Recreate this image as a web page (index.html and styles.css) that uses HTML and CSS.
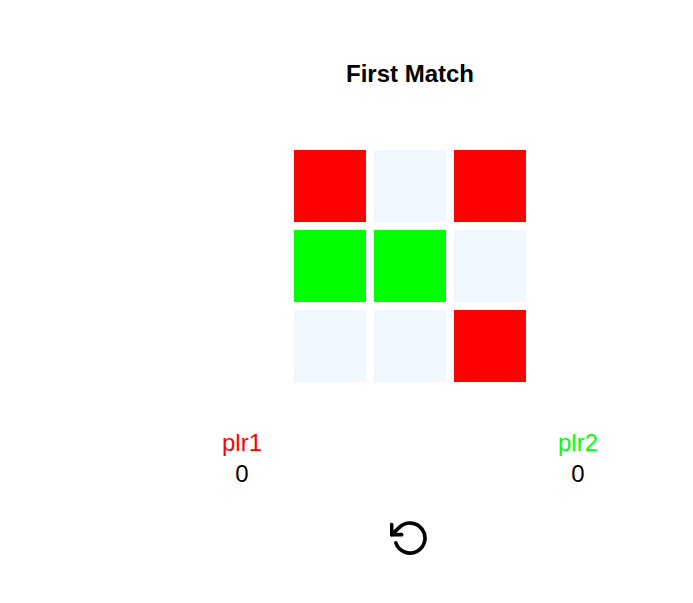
FILE: index.html
```html
<!DOCTYPE html>
<html lang="en">
<head>
    <meta charset="UTF-8">
    <meta name="viewport" content="width=device-width, initial-scale=1.0">
    <title>First Match</title>
    <link rel="stylesheet" href="styles.css">
</head>
<body>
    <div class="game">
        <h1 class="title">First Match</h1>
        <div class="board">
            <div class="cell red"></div>
            <div class="cell"></div>
            <div class="cell red"></div>
            <div class="cell green"></div>
            <div class="cell green"></div>
            <div class="cell"></div>
            <div class="cell"></div>
            <div class="cell"></div>
            <div class="cell red"></div>
        </div>
        <div class="scores">
            <div class="player">
                <div class="name name-red">plr1</div>
                <div class="score">0</div>
            </div>
            <div class="player">
                <div class="name name-green">plr2</div>
                <div class="score">0</div>
            </div>
        </div>
        <button class="reset" aria-label="Restart">
            <svg width="40" height="40" viewBox="0 0 24 24" fill="none" stroke="currentColor" stroke-width="2.2" stroke-linecap="round" stroke-linejoin="round">
                <path d="M1 4v6h6"></path>
                <path d="M3.51 15a9 9 0 1 0 2.13-9.36L1 10"></path>
            </svg>
        </button>
    </div>
</body>
</html>
```

FILE: styles.css
```css
body {
    font-family: "Liberation Sans", Arial, sans-serif;
    margin: 0;
    background-color: white;
    color: black;
}
.game {
    display: flex;
    flex-direction: column;
    align-items: center;
    width: 566px;
    margin-left: 127px;
}
.title {
    font-size: 24px;
    line-height: 25px;
    font-weight: bold;
    margin: 61px 0 0;
}
.board {
    display: grid;
    grid-template-columns: repeat(3, 72px);
    grid-auto-rows: 72px;
    gap: 8px;
    margin-top: 64px;
}
.cell {
    background-color: #f0f8ff;
}
.red {
    background-color: #ff0000;
}
.green {
    background-color: #00ff00;
}
.scores {
    display: flex;
    justify-content: space-between;
    width: 400px;
    margin-top: 48px;
}
.player {
    width: 64px;
    text-align: center;
    font-size: 24px;
}
.name {
    line-height: 25px;
}
.name-red {
    color: #ff0000;
}
.name-green {
    color: #00ff00;
}
.score {
    line-height: 25px;
    margin-top: 6px;
}
.reset {
    display: flex;
    padding: 0;
    margin-top: 32px;
    border: none;
    background: none;
    color: black;
    cursor: pointer;
}
```
